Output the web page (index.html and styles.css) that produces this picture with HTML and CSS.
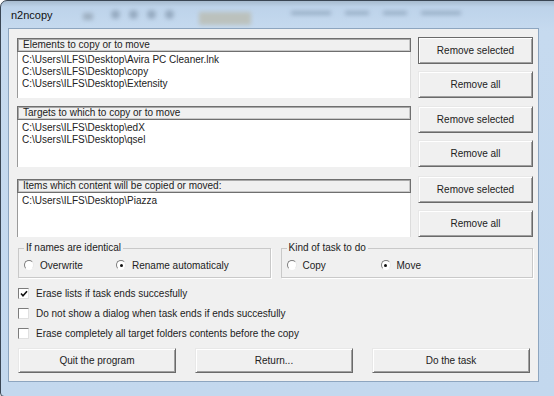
FILE: index.html
```html
<!DOCTYPE html>
<html lang="en">
<head>
    <meta charset="UTF-8">
    <title>n2ncopy</title>
    <link rel="stylesheet" href="styles.css">
</head>
<body>
<div class="window">
    <div class="titlebar">
        <span class="title">n2ncopy</span>
        <span class="blur blur-icon"></span>
        <span class="blur blur-dot"></span>
        <span class="blur blur-dot"></span>
        <span class="blur blur-dot"></span>
        <span class="blur blur-dot"></span>
        <span class="blur blur-tab"></span>
        <span class="blur blur-text"></span>
        <span class="blur blur-text short"></span>
        <span class="blur blur-text short"></span>
        <span class="blur blur-text"></span>
    </div>
    <div class="client">
        <div class="row row-1">
            <div class="list-group">
                <div class="list-header">Elements to copy or to move</div>
                <ul class="list">
                    <li>C:\Users\ILFS\Desktop\Avira PC Cleaner.lnk</li>
                    <li>C:\Users\ILFS\Desktop\copy</li>
                    <li>C:\Users\ILFS\Desktop\Extensity</li>
                </ul>
            </div>
            <div class="btn-col">
                <button class="btn default">Remove selected</button>
                <button class="btn">Remove all</button>
            </div>
        </div>
        <div class="row row-2">
            <div class="list-group">
                <div class="list-header">Targets to which to copy or to move</div>
                <ul class="list">
                    <li>C:\Users\ILFS\Desktop\edX</li>
                    <li>C:\Users\ILFS\Desktop\qsel</li>
                </ul>
            </div>
            <div class="btn-col">
                <button class="btn">Remove selected</button>
                <button class="btn">Remove all</button>
            </div>
        </div>
        <div class="row row-3">
            <div class="list-group">
                <div class="list-header">Items which content will be copied or moved:</div>
                <ul class="list">
                    <li>C:\Users\ILFS\Desktop\Piazza</li>
                </ul>
            </div>
            <div class="btn-col">
                <button class="btn">Remove selected</button>
                <button class="btn">Remove all</button>
            </div>
        </div>

        <div class="options">
            <fieldset class="group group-names">
                <legend>If names are identical</legend>
                <label class="radio-item"><span class="radio"></span>Overwrite</label>
                <label class="radio-item"><span class="radio checked"></span>Rename automaticaly</label>
            </fieldset>
            <fieldset class="group group-kind">
                <legend>Kind of task to do</legend>
                <label class="radio-item"><span class="radio"></span>Copy</label>
                <label class="radio-item"><span class="radio checked"></span>Move</label>
            </fieldset>
        </div>

        <div class="checks">
            <label class="check-item">
                <span class="check">
                    <svg width="8" height="8" viewBox="0 0 8 8"><path d="M1 3.5 L3 5.8 L7 1.2" fill="none" stroke="#111" stroke-width="1.6"/></svg>
                </span>Erase lists if task ends succesfully
            </label>
            <label class="check-item"><span class="check"></span>Do not show a dialog when task ends if ends succesfully</label>
            <label class="check-item"><span class="check"></span>Erase completely all target folders contents before the copy</label>
        </div>

        <div class="actions">
            <button class="btn big">Quit the program</button>
            <button class="btn big">Return...</button>
            <button class="btn big">Do the task</button>
        </div>
    </div>
</div>
</body>
</html>
```

FILE: styles.css
```css
body {
    margin: 0;
    background: #ffffff;
    font-family: "Liberation Sans", Arial, sans-serif;
    font-size: 10px;
    color: #222222;
}

.window {
    width: 545px;
    height: 388px;
    border: 1px solid #3a4654;
    border-radius: 7px 7px 4px 4px;
    background: linear-gradient(#a7bbcf 0px, #bdd3ea 6px, #c6daef 30px, #c3d8ee 100%);
    padding: 0 7px 7px 7px;
    box-sizing: content-box;
    box-shadow: 1px 2px 3px rgba(0, 0, 0, 0.45);
}

.titlebar {
    height: 27px;
    display: flex;
    align-items: center;
    overflow: hidden;
}

.title {
    font-size: 11px;
    color: #111111;
    margin-left: 3px;
    margin-right: 30px;
}

.blur {
    display: inline-block;
    filter: blur(2px);
    opacity: 0.6;
}

.blur-icon {
    width: 10px;
    height: 7px;
    background: #8897a6;
    margin-right: 18px;
    margin-top: 4px;
}

.blur-dot {
    width: 9px;
    height: 9px;
    border-radius: 50%;
    background: #7a8ea4;
    margin-right: 9px;
}

.blur-tab {
    width: 52px;
    height: 13px;
    background: #b8b49e;
    margin-left: 16px;
    margin-right: 40px;
    margin-top: 8px;
}

.blur-text {
    width: 40px;
    height: 4px;
    background: #7f95ad;
    margin-right: 14px;
    margin-top: -4px;
}

.blur-text.short {
    width: 24px;
}

.client {
    width: 529px;
    height: 352px;
    background: #f0f0f0;
    border: 1px solid #8da5bf;
    padding: 0;
    box-sizing: content-box;
    display: flex;
    flex-direction: column;
}

.row {
    display: flex;
    gap: 7px;
    padding: 0 5px 0 8px;
    height: 61px;
}

.row-1 {
    margin-top: 8px;
}

.row-2 {
    margin-top: 8px;
}

.row-3 {
    margin-top: 9px;
}

.list-group {
    width: 394px;
    display: flex;
    flex-direction: column;
}

.row-1 .list-group {
    padding-top: 1px;
}

.row-3 .list-group {
    padding-top: 3px;
}

.list-header {
    height: 12px;
    line-height: 12px;
    padding-left: 5px;
    border: 1px solid #6f6f6f;
    box-shadow: inset 1px 1px 0 #a8a8a8, inset -1px -1px 0 #c8c8c8;
    background: #f0f0f0;
}

.list {
    flex: 1;
    margin: 0;
    padding: 2px 0 0 4px;
    list-style: none;
    background: #ffffff;
    border-left: 1px solid #9a9a9a;
    border-right: 1px solid #dcdcdc;
}

.list li {
    height: 12px;
    line-height: 12px;
    white-space: nowrap;
}

.btn-col {
    width: 115px;
    display: flex;
    flex-direction: column;
    gap: 7px;
}

.btn {
    font-family: inherit;
    font-size: 10px;
    color: #222222;
    background: #f0f0f0;
    border: 1px solid;
    border-color: #e8e8e8 #6a6a6a #6a6a6a #e8e8e8;
    box-shadow: inset 1px 1px 0 #ffffff, inset -1px -1px 0 #a0a0a0;
    padding: 0;
    border-radius: 0;
}

.btn-col .btn {
    height: 27px;
}

.btn.default {
    border-color: #6a6a6a;
}

.options {
    display: flex;
    gap: 10px;
    padding: 0 5px 0 9px;
    margin-top: 5px;
}

.group {
    margin: 0;
    padding: 3px 0 4px 5px;
    border: 1px solid #c9c9c9;
    box-shadow: 1px 1px 0 #ffffff;
    height: 27px;
    display: flex;
    align-items: center;
}

.group legend {
    padding: 0 2px;
    margin-left: 0;
    line-height: 12px;
}

.group-names {
    width: 247px;
}

.group-kind {
    width: 247px;
}

.radio-item {
    display: flex;
    align-items: center;
}

.group-names .radio-item:first-of-type {
    width: 92px;
}

.group-kind .radio-item:first-of-type {
    width: 94px;
}

.radio {
    width: 8px;
    height: 8px;
    border-radius: 50%;
    border: 1px solid;
    border-color: #7c7c7c #e8e8e8 #ffffff #7c7c7c;
    background: #ffffff;
    margin-right: 6px;
    display: flex;
    align-items: center;
    justify-content: center;
}

.radio.checked::after {
    content: "";
    width: 3px;
    height: 3px;
    border-radius: 50%;
    background: #111111;
}

.checks {
    display: flex;
    flex-direction: column;
    gap: 9px;
    padding-left: 9px;
    margin-top: 10px;
}

.check-item {
    display: flex;
    align-items: center;
    height: 11px;
}

.check {
    width: 9px;
    height: 9px;
    border: 1px solid;
    border-color: #7c7c7c #e0e0e0 #e0e0e0 #7c7c7c;
    background: #ffffff;
    margin-right: 7px;
    display: flex;
    align-items: center;
    justify-content: center;
}

.actions {
    display: flex;
    gap: 19px;
    padding-left: 9px;
    margin-top: 9px;
}

.btn.big {
    width: 158px;
    height: 25px;
}
```
